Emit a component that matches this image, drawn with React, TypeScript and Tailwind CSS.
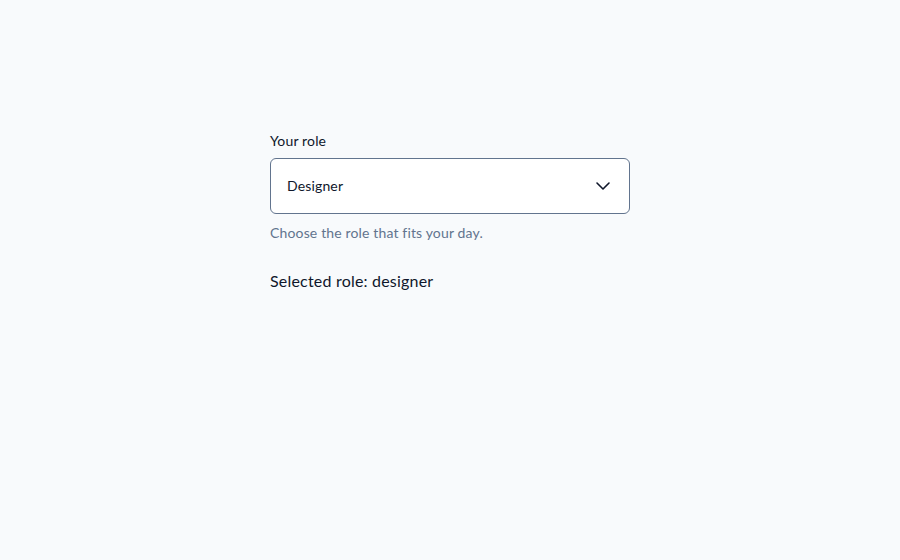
import React, { useState } from "react";

export default function App() {
  const [role] = useState("designer");

  return (
    <main
      className="min-h-screen bg-slate-50 pt-[131px]"
      style={{ fontFamily: '"Lato", "Liberation Sans", sans-serif' }}
    >
      <div className="mx-auto w-[360px]">
        <label className="block text-sm leading-5 tracking-[0.15px] text-slate-900">
          Your role
        </label>
        <div className="mt-[7px] flex h-14 items-center justify-between rounded-md border border-slate-500 bg-white pl-4 pr-[14px]">
          <span className="text-sm tracking-[0.15px] text-slate-900">Designer</span>
          <svg
            width="24"
            height="24"
            viewBox="0 0 24 24"
            fill="none"
            stroke="#0f172a"
            strokeWidth="1.6"
            strokeLinecap="round"
            strokeLinejoin="round"
          >
            <path d="m6 9 6 6 6-6" />
          </svg>
        </div>
        <p className="mt-[9px] text-sm leading-5 tracking-[0.15px] text-slate-500">
          Choose the role that fits your day.
        </p>
        <p className="mt-[26px] text-base leading-6 tracking-[0.2px] text-slate-900">
          Selected role: {role}
        </p>
      </div>
    </main>
  );
}
